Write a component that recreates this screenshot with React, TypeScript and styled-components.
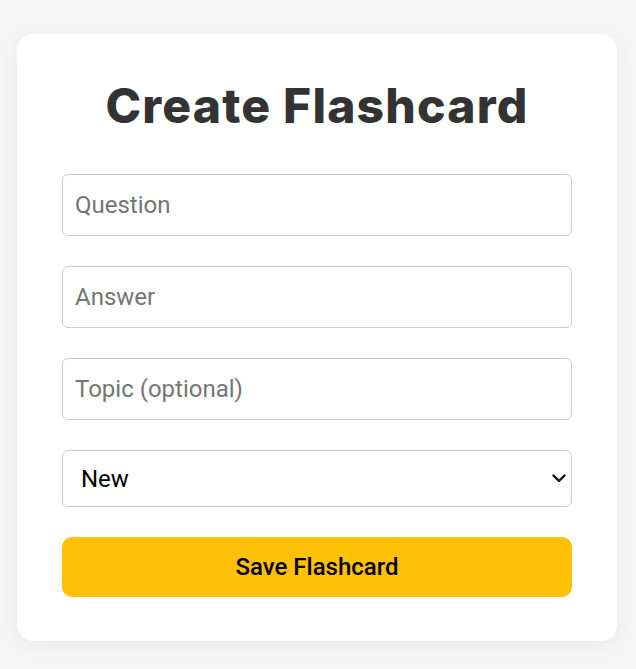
import React, { useState } from "react";
import styled, { createGlobalStyle } from "styled-components";

const GlobalStyle = createGlobalStyle`
  html, body {
    margin: 0;
    padding: 0;
    background: #f6f6f6;
    font-family: Roboto, "Liberation Sans", sans-serif;
  }
  * {
    box-sizing: border-box;
  }
`

const Page = styled.div`
  display: flex;
  justify-content: center;
  padding: 34px 19px 28px 17px;
`

const Card = styled.form`
  width: 600px;
  display: flex;
  flex-direction: column;
  gap: 30px;
  padding: 46px 45px 44px 45px;
  background: #ffffff;
  border-radius: 16px;
  box-shadow: 0 4px 20px rgba(0, 0, 0, 0.06);
`

const Title = styled.h1`
  margin: 0 0 12px 0;
  text-align: center;
  font-family: Inter, "Open Sans", sans-serif;
  font-weight: 800;
  font-size: 48px;
  line-height: 52px;
  letter-spacing: 1.2px;
  color: #333333;
`

const Input = styled.input`
  height: 62px;
  padding: 0 12px;
  font-family: Roboto, "Liberation Sans", sans-serif;
  font-size: 24px;
  color: #222;
  border: 1px solid #cccccc;
  border-radius: 6px;
  background: #ffffff;
  outline: none;

  ::placeholder {
    color: #777777;
  }
`

const SelectWrap = styled.div`
  position: relative;
  display: flex;
`

const Select = styled.select`
  flex: 1;
  height: 57px;
  padding: 0 32px 0 18px;
  font-family: Roboto, "Liberation Sans", sans-serif;
  font-size: 24px;
  color: #000;
  border: 1px solid #cccccc;
  border-radius: 6px;
  background: #ffffff;
  outline: none;
  appearance: none;
  -webkit-appearance: none;
`

const Chevron = styled.svg`
  position: absolute;
  right: 6px;
  top: 50%;
  margin-top: -5px;
  width: 14px;
  height: 9px;
  pointer-events: none;
`

const Button = styled.button`
  height: 60px;
  border: none;
  border-radius: 10px;
  background: #ffc107;
  color: #000000;
  font-family: Roboto, "Liberation Sans", sans-serif;
  font-weight: 500;
  font-size: 24px;
  cursor: pointer;
`

const App = () => {
    const [question, setQuestion] = useState('')
    const [answer, setAnswer] = useState('')
    const [topic, setTopic] = useState('')
    const [status, setStatus] = useState('new')

    function handleSubmit(event: any) {
        event.preventDefault()
    }

    return (<>
        <GlobalStyle/>
        <Page>
            <Card onSubmit={handleSubmit}>
                <Title>Create Flashcard</Title>
                <Input type={'text'} placeholder={'Question'} value={question} onChange={e => setQuestion(e.target.value)}/>
                <Input type={'text'} placeholder={'Answer'} value={answer} onChange={e => setAnswer(e.target.value)}/>
                <Input type={'text'} placeholder={'Topic (optional)'} value={topic} onChange={e => setTopic(e.target.value)}/>
                <SelectWrap>
                    <Select value={status} onChange={e => setStatus(e.target.value)}>
                        <option value={'new'}>New</option>
                        <option value={'learning'}>Learning</option>
                        <option value={'mastered'}>Mastered</option>
                    </Select>
                    <Chevron viewBox="0 0 14 9">
                        <path d="M1.5 1.5 L7 7 L12.5 1.5" fill="none" stroke="#111" strokeWidth="2.4" strokeLinecap="round" strokeLinejoin="round"/>
                    </Chevron>
                </SelectWrap>
                <Button type={'submit'}>Save Flashcard</Button>
            </Card>
        </Page>
    </>)
}

export default App
